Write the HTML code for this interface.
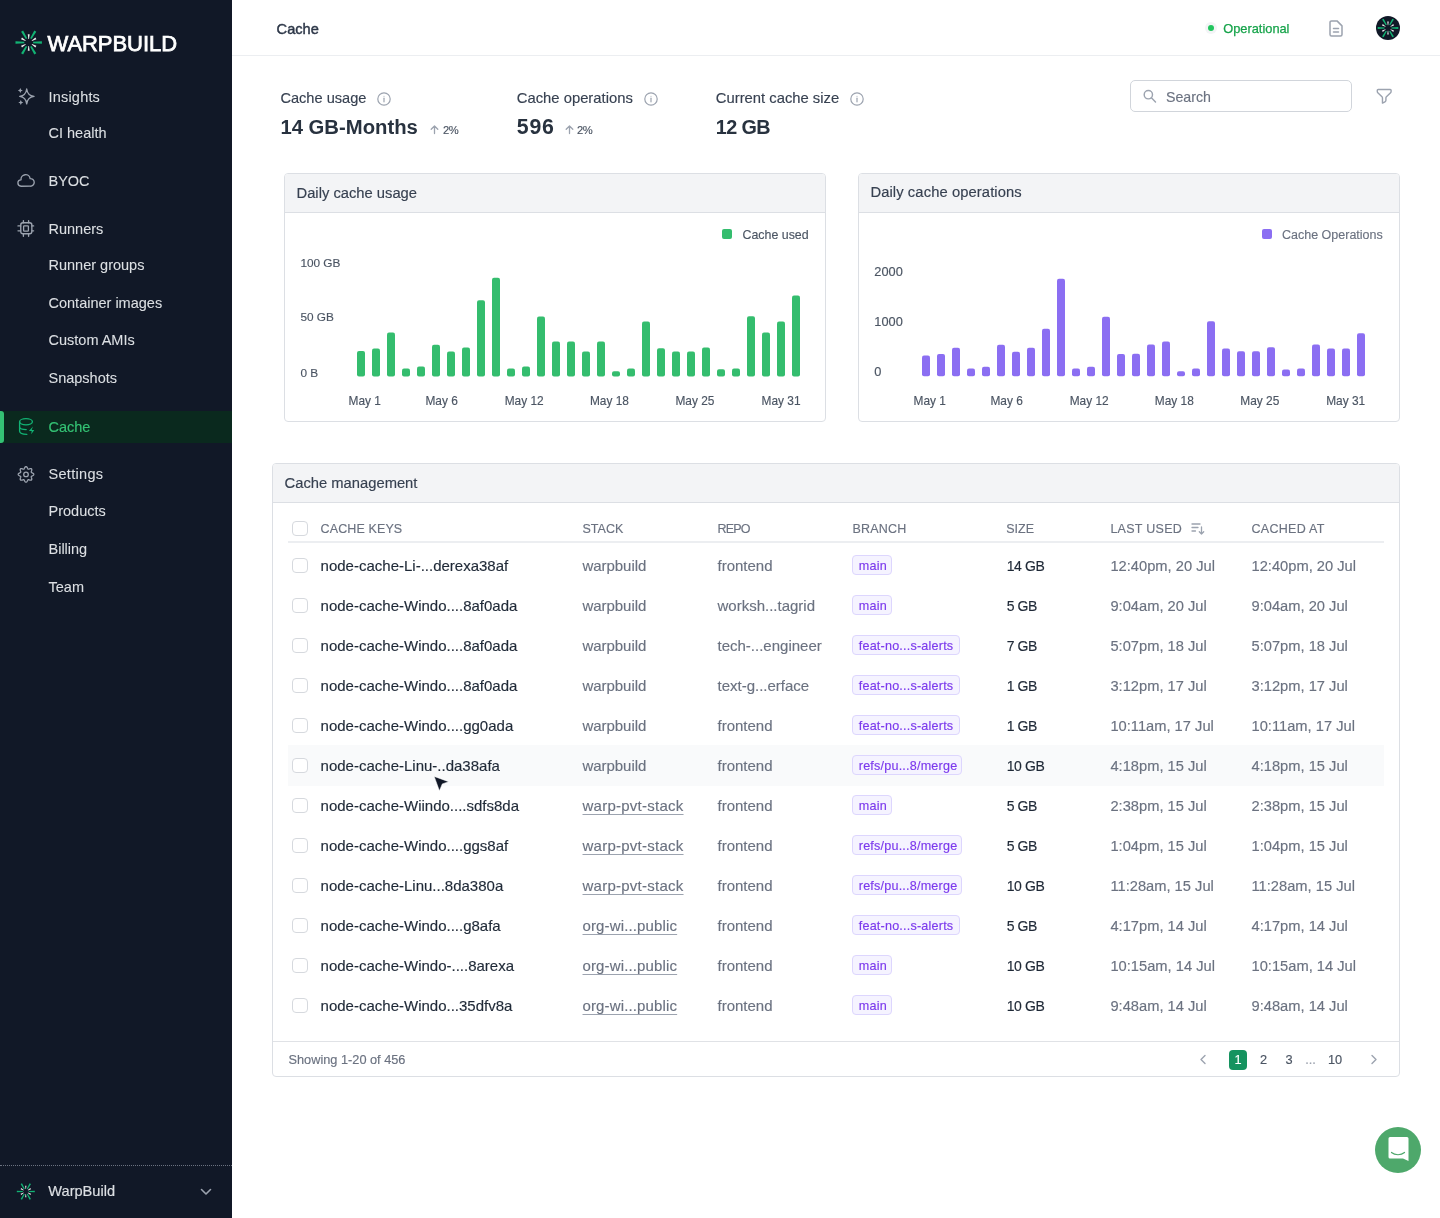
<!DOCTYPE html>
<html><head><meta charset="utf-8"><title>Cache - WarpBuild</title>
<style>
html,body{margin:0;padding:0;}
body{width:1440px;height:1218px;position:relative;overflow:hidden;background:#fff;font-family:"Liberation Sans",sans-serif;}
.t{position:absolute;white-space:nowrap;line-height:1;font-family:"Liberation Sans",sans-serif;-webkit-text-stroke-width:0.15px;}
#wrap{position:absolute;left:0;top:0;width:1440px;height:1218px;will-change:transform;}
svg{position:absolute;overflow:visible;}
</style></head><body><div id="wrap">

<div style="position:absolute;left:0px;top:0px;width:232px;height:1218px;background:#111827;"></div>
<svg style="left:0;top:0" width="232" height="1218"><path d="M33.10,43.30 L41.90,43.65 L41.90,41.35 L33.10,41.70Z" fill="#12b374"/><path d="M31.67,44.56 L35.41,47.47 L36.36,45.83 L31.97,44.04Z" fill="#eeeeee"/><path d="M30.21,46.71 L34.30,54.51 L36.30,53.36 L31.59,45.91Z" fill="#12b374"/><path d="M28.40,46.10 L27.75,50.80 L29.65,50.80 L29.00,46.10Z" fill="#eeeeee"/><path d="M25.81,45.91 L21.10,53.36 L23.10,54.51 L27.19,46.71Z" fill="#12b374"/><path d="M25.43,44.04 L21.04,45.83 L21.99,47.47 L25.73,44.56Z" fill="#eeeeee"/><path d="M24.30,41.70 L15.50,41.35 L15.50,43.65 L24.30,43.30Z" fill="#12b374"/><path d="M25.73,40.44 L21.99,37.53 L21.04,39.17 L25.43,40.96Z" fill="#eeeeee"/><path d="M27.19,38.29 L23.10,30.49 L21.10,31.64 L25.81,39.09Z" fill="#12b374"/><path d="M29.00,38.90 L29.65,34.20 L27.75,34.20 L28.40,38.90Z" fill="#eeeeee"/><path d="M31.59,39.09 L36.30,31.64 L34.30,30.49 L30.21,38.29Z" fill="#12b374"/><path d="M31.97,40.96 L36.36,39.17 L35.41,37.53 L31.67,40.44Z" fill="#eeeeee"/></svg>
<div class="t " style="left:47.50px;top:33.00px;font-size:22px;color:#ffffff;-webkit-text-stroke:0.62px #ffffff;letter-spacing:-0.05px;-webkit-text-stroke:0.75px #fff;">WARPBUILD</div>
<div class="t " style="left:48.50px;top:90.00px;font-size:14.5px;color:#dcdfe3;letter-spacing:0.2px;-webkit-text-stroke-width:0.1px;">Insights</div>
<div class="t " style="left:48.50px;top:126.00px;font-size:14.5px;color:#dcdfe3;letter-spacing:0px;-webkit-text-stroke-width:0.1px;">CI health</div>
<div class="t " style="left:48.50px;top:174.00px;font-size:14.5px;color:#dcdfe3;letter-spacing:0px;-webkit-text-stroke-width:0.1px;">BYOC</div>
<div class="t " style="left:48.50px;top:222.00px;font-size:14.5px;color:#dcdfe3;letter-spacing:0px;-webkit-text-stroke-width:0.1px;">Runners</div>
<div class="t " style="left:48.50px;top:258.00px;font-size:14.5px;color:#dcdfe3;letter-spacing:0px;-webkit-text-stroke-width:0.1px;">Runner groups</div>
<div class="t " style="left:48.50px;top:296.00px;font-size:14.5px;color:#dcdfe3;letter-spacing:0px;-webkit-text-stroke-width:0.1px;">Container images</div>
<div class="t " style="left:48.50px;top:333.00px;font-size:14.5px;color:#dcdfe3;letter-spacing:0px;-webkit-text-stroke-width:0.1px;">Custom AMIs</div>
<div class="t " style="left:48.50px;top:371.00px;font-size:14.5px;color:#dcdfe3;letter-spacing:0px;-webkit-text-stroke-width:0.1px;">Snapshots</div>
<div class="t " style="left:48.50px;top:467.00px;font-size:14.5px;color:#dcdfe3;letter-spacing:0.3px;-webkit-text-stroke-width:0.1px;">Settings</div>
<div class="t " style="left:48.50px;top:504.00px;font-size:14.5px;color:#dcdfe3;letter-spacing:0px;-webkit-text-stroke-width:0.1px;">Products</div>
<div class="t " style="left:48.50px;top:542.00px;font-size:14.5px;color:#dcdfe3;letter-spacing:0px;-webkit-text-stroke-width:0.1px;">Billing</div>
<div class="t " style="left:48.50px;top:580.00px;font-size:14.5px;color:#dcdfe3;letter-spacing:0px;-webkit-text-stroke-width:0.1px;">Team</div>
<div style="position:absolute;left:0px;top:410.5px;width:232px;height:32px;background:#0a291e;"></div>
<div style="position:absolute;left:0px;top:410.5px;width:4px;height:32px;background:#34c274;border-radius:0 3px 3px 0;"></div>
<div class="t " style="left:48.50px;top:420.00px;font-size:14.5px;color:#34c274;">Cache</div>
<svg style="left:0;top:0" width="232" height="600">
<g fill="none" stroke="#9ca3af" stroke-width="1.35" stroke-linecap="round" stroke-linejoin="round">
<path d="M26.7,89 Q27.5,95.6 34,96.4 Q27.5,97.2 26.7,103.9 Q25.9,97.2 19.7,96.4 Q25.9,95.6 26.7,89 Z"/>
<path d="M21.2,186.2 A3.2,3.2 0 0 1 21.03,179.80 A4.6,4.6 0 0 1 30.15,178.61 A3.8,3.8 0 1 1 30.4,186.2 Z"/>
<rect x="20.75" y="222.75" width="11.1" height="11" rx="2.2"/>
<path d="M23.4,220.6V222.7 M28.6,220.6V222.7 M23.4,233.8V236.2 M28.6,233.8V236.2 M18,225.9H20.7 M18,230.8H20.7 M31.9,225.9H33.6 M31.9,230.8H33.6"/>
<rect x="23.6" y="225.85" width="4.8" height="5.3" rx="0.6" stroke-width="1.3"/>
<path d="M33.80,474.40 L33.74,474.70 L33.58,475.00 L33.32,475.27 L32.99,475.51 L32.62,475.72 L32.25,475.90 L31.90,476.06 L31.61,476.22 L31.40,476.39 L31.27,476.58 L31.22,476.81 L31.26,477.08 L31.35,477.40 L31.48,477.76 L31.61,478.15 L31.72,478.56 L31.79,478.96 L31.78,479.34 L31.69,479.66 L31.52,479.92 L31.26,480.09 L30.94,480.18 L30.56,480.19 L30.16,480.12 L29.75,480.01 L29.36,479.88 L29.00,479.75 L28.68,479.66 L28.41,479.62 L28.18,479.67 L27.99,479.80 L27.82,480.01 L27.66,480.30 L27.50,480.65 L27.32,481.02 L27.11,481.39 L26.87,481.72 L26.60,481.98 L26.30,482.14 L26.00,482.20 L25.70,482.14 L25.40,481.98 L25.13,481.72 L24.89,481.39 L24.68,481.02 L24.50,480.65 L24.34,480.30 L24.18,480.01 L24.01,479.80 L23.82,479.67 L23.59,479.62 L23.32,479.66 L23.00,479.75 L22.64,479.88 L22.25,480.01 L21.84,480.12 L21.44,480.19 L21.06,480.18 L20.74,480.09 L20.48,479.92 L20.31,479.66 L20.22,479.34 L20.21,478.96 L20.28,478.56 L20.39,478.15 L20.52,477.76 L20.65,477.40 L20.74,477.08 L20.78,476.81 L20.73,476.58 L20.60,476.39 L20.39,476.22 L20.10,476.06 L19.75,475.90 L19.38,475.72 L19.01,475.51 L18.68,475.27 L18.42,475.00 L18.26,474.70 L18.20,474.40 L18.26,474.10 L18.42,473.80 L18.68,473.53 L19.01,473.29 L19.38,473.08 L19.75,472.90 L20.10,472.74 L20.39,472.58 L20.60,472.41 L20.73,472.22 L20.78,471.99 L20.74,471.72 L20.65,471.40 L20.52,471.04 L20.39,470.65 L20.28,470.24 L20.21,469.84 L20.22,469.46 L20.31,469.14 L20.48,468.88 L20.74,468.71 L21.06,468.62 L21.44,468.61 L21.84,468.68 L22.25,468.79 L22.64,468.92 L23.00,469.05 L23.32,469.14 L23.59,469.18 L23.82,469.13 L24.01,469.00 L24.18,468.79 L24.34,468.50 L24.50,468.15 L24.68,467.78 L24.89,467.41 L25.13,467.08 L25.40,466.82 L25.70,466.66 L26.00,466.60 L26.30,466.66 L26.60,466.82 L26.87,467.08 L27.11,467.41 L27.32,467.78 L27.50,468.15 L27.66,468.50 L27.82,468.79 L27.99,469.00 L28.18,469.13 L28.41,469.18 L28.68,469.14 L29.00,469.05 L29.36,468.92 L29.75,468.79 L30.16,468.68 L30.56,468.61 L30.94,468.62 L31.26,468.71 L31.52,468.88 L31.69,469.14 L31.78,469.46 L31.79,469.84 L31.72,470.24 L31.61,470.65 L31.48,471.04 L31.35,471.40 L31.26,471.72 L31.22,471.99 L31.27,472.22 L31.40,472.41 L31.61,472.58 L31.90,472.74 L32.25,472.90 L32.62,473.08 L32.99,473.29 L33.32,473.53 L33.58,473.80 L33.74,474.10 L33.80,474.40Z" stroke-width="1.3"/>
<circle cx="26" cy="474.4" r="2.3" stroke-width="1.3"/>
</g>
<g fill="#9ca3af">
<path d="M20.3,88 Q20.7,90.1 22.8,90.5 Q20.7,90.9 20.3,93 Q19.9,90.9 17.8,90.5 Q19.9,90.1 20.3,88 Z"/>
<path d="M20.8,99.9 Q21.2,102 23.3,102.4 Q21.2,102.8 20.8,104.9 Q20.4,102.8 18.3,102.4 Q20.4,102 20.8,99.9 Z"/>
</g>
<g fill="none" stroke="#12b374" stroke-width="1.35" stroke-linecap="round" stroke-linejoin="round">
<ellipse cx="26" cy="421.8" rx="6.4" ry="3.1"/>
<path d="M19.6,421.8 V431.3 Q19.8,434.3 26.8,434.4"/>
<path d="M19.6,427.4 Q20.2,429.6 26.2,429.6"/>
</g>
<path d="M32.9,426.6 L28.9,431 L31.7,431 L31.2,434.3 L34.3,429.9 L31.7,429.9 Z" fill="#12b374"/>
</svg>
<div style="position:absolute;left:0px;top:1165px;width:232px;height:0px;border-top:1px dotted #6b7280;"></div>
<svg style="left:0;top:0" width="232" height="1218"><path d="M28.79,1192.04 L34.78,1192.28 L34.78,1190.72 L28.79,1190.96Z" fill="#12b374"/><path d="M27.82,1192.90 L30.36,1194.88 L31.01,1193.76 L28.02,1192.55Z" fill="#eeeeee"/><path d="M26.82,1194.36 L29.61,1199.66 L30.97,1198.88 L27.77,1193.82Z" fill="#12b374"/><path d="M25.60,1193.95 L25.15,1197.14 L26.45,1197.14 L26.00,1193.95Z" fill="#eeeeee"/><path d="M23.83,1193.82 L20.63,1198.88 L21.99,1199.66 L24.78,1194.36Z" fill="#12b374"/><path d="M23.58,1192.55 L20.59,1193.76 L21.24,1194.88 L23.78,1192.90Z" fill="#eeeeee"/><path d="M22.81,1190.96 L16.82,1190.72 L16.82,1192.28 L22.81,1192.04Z" fill="#12b374"/><path d="M23.78,1190.10 L21.24,1188.12 L20.59,1189.24 L23.58,1190.45Z" fill="#eeeeee"/><path d="M24.78,1188.64 L21.99,1183.34 L20.63,1184.12 L23.83,1189.18Z" fill="#12b374"/><path d="M26.00,1189.05 L26.45,1185.86 L25.15,1185.86 L25.60,1189.05Z" fill="#eeeeee"/><path d="M27.77,1189.18 L30.97,1184.12 L29.61,1183.34 L26.82,1188.64Z" fill="#12b374"/><path d="M28.02,1190.45 L31.01,1189.24 L30.36,1188.12 L27.82,1190.10Z" fill="#eeeeee"/></svg>
<div class="t " style="left:48.30px;top:1184.00px;font-size:14.6px;color:#dcdfe3;-webkit-text-stroke-width:0.2px;">WarpBuild</div>
<svg style="left:200px;top:1186px" width="12" height="12" viewBox="0 0 12 12" fill="none" stroke="#9ca3af" stroke-width="1.6" stroke-linecap="round" stroke-linejoin="round"><path d="M1.5 3.5 6 8l4.5-4.5"/></svg>
<div style="position:absolute;left:232px;top:55px;width:1208px;height:1px;background:#eceef1;"></div>
<div class="t " style="left:276.60px;top:22.00px;font-size:14.6px;color:#2d3748;-webkit-text-stroke:0.41px #2d3748;-webkit-text-stroke-width:0.45px;">Cache</div>
<div style="position:absolute;left:1205px;top:22.3px;width:12px;height:12px;background:#f3f4f6;border-radius:50%;"></div>
<div style="position:absolute;left:1208px;top:25.3px;width:6px;height:6px;background:#22c55e;border-radius:50%;"></div>
<div class="t " style="left:1223.30px;top:23.00px;font-size:12.8px;color:#16a34a;font-weight:400;-webkit-text-stroke:0.25px #16a34a;">Operational</div>
<svg style="left:1326px;top:18px" width="20" height="20" viewBox="0 0 20 20" fill="none" stroke="#9ca3af" stroke-width="1.5" stroke-linecap="round" stroke-linejoin="round">
<path d="M4 4.4a1.5 1.5 0 0 1 1.5-1.5H11l5 5v8.6a1.5 1.5 0 0 1-1.5 1.5h-9A1.5 1.5 0 0 1 4 16.5Z"/><path d="M7.5 10.4h5M7.5 13.9h5"/></svg>
<div style="position:absolute;left:1376px;top:16px;width:24px;height:24px;background:#111827;border-radius:50%;"></div>
<svg style="left:0;top:0" width="1440" height="60"><path d="M1391.43,28.62 L1398.30,28.90 L1398.30,27.10 L1391.43,27.38Z" fill="#12b374"/><path d="M1390.31,29.61 L1393.24,31.88 L1393.98,30.60 L1390.55,29.20Z" fill="#eeeeee"/><path d="M1389.18,31.28 L1392.37,37.37 L1393.92,36.47 L1390.26,30.66Z" fill="#12b374"/><path d="M1387.77,30.81 L1387.26,34.47 L1388.74,34.47 L1388.23,30.81Z" fill="#eeeeee"/><path d="M1385.74,30.66 L1382.08,36.47 L1383.63,37.37 L1386.82,31.28Z" fill="#12b374"/><path d="M1385.45,29.20 L1382.02,30.60 L1382.76,31.88 L1385.69,29.61Z" fill="#eeeeee"/><path d="M1384.57,27.38 L1377.70,27.10 L1377.70,28.90 L1384.57,28.62Z" fill="#12b374"/><path d="M1385.69,26.39 L1382.76,24.12 L1382.02,25.40 L1385.45,26.80Z" fill="#eeeeee"/><path d="M1386.82,24.72 L1383.63,18.63 L1382.08,19.53 L1385.74,25.34Z" fill="#12b374"/><path d="M1388.23,25.19 L1388.74,21.53 L1387.26,21.53 L1387.77,25.19Z" fill="#eeeeee"/><path d="M1390.26,25.34 L1393.92,19.53 L1392.37,18.63 L1389.18,24.72Z" fill="#12b374"/><path d="M1390.55,26.80 L1393.98,25.40 L1393.24,24.12 L1390.31,26.39Z" fill="#eeeeee"/></svg>
<div class="t " style="left:280.40px;top:91.00px;font-size:14.6px;color:#374151;">Cache usage</div>
<svg style="left:377px;top:91.8px" width="14" height="14" viewBox="0 0 14 14" fill="none" stroke="#9ca3af" stroke-width="1.2"><circle cx="7" cy="7" r="6.2"/><path d="M7 6.2v3.6" stroke-linecap="round"/><circle cx="7" cy="4.2" r="0.5" fill="#9ca3af" stroke="none"/></svg>
<div class="t " style="left:280.40px;top:117.00px;font-size:20.3px;color:#28323f;font-weight:700;-webkit-text-stroke-width:0;">14 GB-Months</div>
<svg style="left:429.7px;top:125px" width="9" height="9" viewBox="0 0 9 9" fill="none" stroke="#9ca3af" stroke-width="1.3" stroke-linecap="round" stroke-linejoin="round"><path d="M4.5 8.5V1M1.2 4.3 4.5 1l3.3 3.3"/></svg>
<div class="t " style="left:443.00px;top:125.00px;font-size:11.2px;color:#4b5563;letter-spacing:-0.4px;">2%</div>
<div class="t " style="left:516.80px;top:91.00px;font-size:14.8px;color:#374151;">Cache operations</div>
<svg style="left:644px;top:91.8px" width="14" height="14" viewBox="0 0 14 14" fill="none" stroke="#9ca3af" stroke-width="1.2"><circle cx="7" cy="7" r="6.2"/><path d="M7 6.2v3.6" stroke-linecap="round"/><circle cx="7" cy="4.2" r="0.5" fill="#9ca3af" stroke="none"/></svg>
<div class="t " style="left:516.80px;top:117.00px;font-size:21.3px;color:#28323f;font-weight:700;-webkit-text-stroke-width:0;letter-spacing:0.8px;">596</div>
<svg style="left:564.7px;top:125px" width="9" height="9" viewBox="0 0 9 9" fill="none" stroke="#9ca3af" stroke-width="1.3" stroke-linecap="round" stroke-linejoin="round"><path d="M4.5 8.5V1M1.2 4.3 4.5 1l3.3 3.3"/></svg>
<div class="t " style="left:577.00px;top:125.00px;font-size:11.2px;color:#4b5563;letter-spacing:-0.4px;">2%</div>
<div class="t " style="left:715.80px;top:91.00px;font-size:14.8px;color:#374151;">Current cache size</div>
<svg style="left:850px;top:91.8px" width="14" height="14" viewBox="0 0 14 14" fill="none" stroke="#9ca3af" stroke-width="1.2"><circle cx="7" cy="7" r="6.2"/><path d="M7 6.2v3.6" stroke-linecap="round"/><circle cx="7" cy="4.2" r="0.5" fill="#9ca3af" stroke="none"/></svg>
<div class="t " style="left:715.80px;top:118.00px;font-size:19.8px;color:#28323f;font-weight:700;-webkit-text-stroke-width:0;letter-spacing:-0.6px;">12 GB</div>
<div style="position:absolute;left:1130px;top:80.4px;width:220px;height:30px;border:1px solid #d1d5db;border-radius:5px;background:#fff;"></div>
<svg style="left:1142px;top:89px" width="16" height="16" viewBox="0 0 16 16" fill="none" stroke="#9ca3af" stroke-width="1.45" stroke-linecap="round"><circle cx="6.35" cy="5.7" r="4.15"/><path d="M9.4 8.8l4.1 4.1"/></svg>
<div class="t " style="left:1166.00px;top:90.00px;font-size:14.2px;color:#6b7280;">Search</div>
<svg style="left:1375px;top:87px" width="18.4" height="18.4" viewBox="0 0 24 24" fill="none" stroke="#9ca3af" stroke-width="1.85" stroke-linecap="round" stroke-linejoin="round"><path d="M4.1 3.2H19.9a1.1 1.1 0 0 1 1.1 1.1v1.5a2.25 2.25 0 0 1-.659 1.591l-5.432 5.432a2.25 2.25 0 0 0-.659 1.591v2.927a2.25 2.25 0 0 1-1.244 2.013L9.75 21v-6.568a2.25 2.25 0 0 0-.659-1.591L3.659 7.409A2.25 2.25 0 0 1 3 5.818V4.3a1.1 1.1 0 0 1 1.1-1.1Z"/></svg>
<div style="position:absolute;left:284px;top:173px;width:540px;height:247px;border:1px solid #dcdfe4;border-radius:4px;background:#fff;"></div>
<div style="position:absolute;left:285px;top:174px;width:540px;height:38px;background:#f3f4f6;border-bottom:1px solid #dcdfe4;border-radius:3px 3px 0 0;"></div>
<div class="t " style="left:296.50px;top:186.00px;font-size:14.75px;color:#374151;">Daily cache usage</div>
<div style="position:absolute;left:858px;top:173px;width:540px;height:247px;border:1px solid #dcdfe4;border-radius:4px;background:#fff;"></div>
<div style="position:absolute;left:859px;top:174px;width:540px;height:38px;background:#f3f4f6;border-bottom:1px solid #dcdfe4;border-radius:3px 3px 0 0;"></div>
<div class="t " style="left:870.40px;top:185.00px;font-size:14.75px;color:#374151;letter-spacing:0.1px;">Daily cache operations</div>
<svg style="left:0;top:0" width="1440" height="450"><rect x="357.0" y="350.9" width="8" height="25.6" rx="2" fill="#34bd6e"/><rect x="372.0" y="348.4" width="8" height="28.1" rx="2" fill="#34bd6e"/><rect x="387.0" y="332.5" width="8" height="44.0" rx="2" fill="#34bd6e"/><rect x="402.0" y="368.5" width="8" height="8.0" rx="2" fill="#34bd6e"/><rect x="417.0" y="366.6" width="8" height="9.9" rx="2" fill="#34bd6e"/><rect x="432.0" y="344.7" width="8" height="31.8" rx="2" fill="#34bd6e"/><rect x="447.0" y="351.6" width="8" height="24.9" rx="2" fill="#34bd6e"/><rect x="462.0" y="347.5" width="8" height="29.0" rx="2" fill="#34bd6e"/><rect x="477.0" y="300.3" width="8" height="76.2" rx="2" fill="#34bd6e"/><rect x="492.0" y="277.8" width="8" height="98.8" rx="2" fill="#34bd6e"/><rect x="507.0" y="368.5" width="8" height="8.0" rx="2" fill="#34bd6e"/><rect x="522.0" y="366.6" width="8" height="9.9" rx="2" fill="#34bd6e"/><rect x="537.0" y="316.6" width="8" height="59.9" rx="2" fill="#34bd6e"/><rect x="552.0" y="341.5" width="8" height="35.0" rx="2" fill="#34bd6e"/><rect x="567.0" y="341.5" width="8" height="35.0" rx="2" fill="#34bd6e"/><rect x="582.0" y="351.6" width="8" height="24.9" rx="2" fill="#34bd6e"/><rect x="597.0" y="341.5" width="8" height="35.0" rx="2" fill="#34bd6e"/><rect x="612.0" y="371.3" width="8" height="5.2" rx="2" fill="#34bd6e"/><rect x="627.0" y="368.4" width="8" height="8.1" rx="2" fill="#34bd6e"/><rect x="642.0" y="321.5" width="8" height="55.0" rx="2" fill="#34bd6e"/><rect x="657.0" y="348.3" width="8" height="28.2" rx="2" fill="#34bd6e"/><rect x="672.0" y="351.6" width="8" height="24.9" rx="2" fill="#34bd6e"/><rect x="687.0" y="351.6" width="8" height="24.9" rx="2" fill="#34bd6e"/><rect x="702.0" y="347.4" width="8" height="29.1" rx="2" fill="#34bd6e"/><rect x="717.0" y="369.3" width="8" height="7.2" rx="2" fill="#34bd6e"/><rect x="732.0" y="368.4" width="8" height="8.1" rx="2" fill="#34bd6e"/><rect x="747.0" y="316.2" width="8" height="60.3" rx="2" fill="#34bd6e"/><rect x="762.0" y="332.4" width="8" height="44.1" rx="2" fill="#34bd6e"/><rect x="777.0" y="321.5" width="8" height="55.0" rx="2" fill="#34bd6e"/><rect x="792.0" y="295.4" width="8" height="81.1" rx="2" fill="#34bd6e"/><rect x="922.0" y="355.6" width="8" height="20.6" rx="2" fill="#8b6ef2"/><rect x="937.0" y="354.0" width="8" height="22.2" rx="2" fill="#8b6ef2"/><rect x="952.0" y="347.8" width="8" height="28.4" rx="2" fill="#8b6ef2"/><rect x="967.0" y="368.6" width="8" height="7.6" rx="2" fill="#8b6ef2"/><rect x="982.0" y="366.7" width="8" height="9.5" rx="2" fill="#8b6ef2"/><rect x="997.0" y="344.7" width="8" height="31.5" rx="2" fill="#8b6ef2"/><rect x="1012.0" y="351.7" width="8" height="24.5" rx="2" fill="#8b6ef2"/><rect x="1027.0" y="347.8" width="8" height="28.4" rx="2" fill="#8b6ef2"/><rect x="1042.0" y="328.7" width="8" height="47.5" rx="2" fill="#8b6ef2"/><rect x="1057.0" y="278.8" width="8" height="97.4" rx="2" fill="#8b6ef2"/><rect x="1072.0" y="368.6" width="8" height="7.6" rx="2" fill="#8b6ef2"/><rect x="1087.0" y="366.7" width="8" height="9.5" rx="2" fill="#8b6ef2"/><rect x="1102.0" y="316.7" width="8" height="59.5" rx="2" fill="#8b6ef2"/><rect x="1117.0" y="354.0" width="8" height="22.2" rx="2" fill="#8b6ef2"/><rect x="1132.0" y="353.8" width="8" height="22.4" rx="2" fill="#8b6ef2"/><rect x="1147.0" y="344.5" width="8" height="31.7" rx="2" fill="#8b6ef2"/><rect x="1162.0" y="341.6" width="8" height="34.6" rx="2" fill="#8b6ef2"/><rect x="1177.0" y="371.2" width="8" height="5.0" rx="2" fill="#8b6ef2"/><rect x="1192.0" y="368.4" width="8" height="7.8" rx="2" fill="#8b6ef2"/><rect x="1207.0" y="321.2" width="8" height="55.0" rx="2" fill="#8b6ef2"/><rect x="1222.0" y="348.4" width="8" height="27.8" rx="2" fill="#8b6ef2"/><rect x="1237.0" y="351.2" width="8" height="25.0" rx="2" fill="#8b6ef2"/><rect x="1252.0" y="351.2" width="8" height="25.0" rx="2" fill="#8b6ef2"/><rect x="1267.0" y="347.3" width="8" height="28.9" rx="2" fill="#8b6ef2"/><rect x="1282.0" y="369.5" width="8" height="6.7" rx="2" fill="#8b6ef2"/><rect x="1297.0" y="368.4" width="8" height="7.8" rx="2" fill="#8b6ef2"/><rect x="1312.0" y="344.5" width="8" height="31.7" rx="2" fill="#8b6ef2"/><rect x="1327.0" y="348.4" width="8" height="27.8" rx="2" fill="#8b6ef2"/><rect x="1342.0" y="348.4" width="8" height="27.8" rx="2" fill="#8b6ef2"/><rect x="1357.0" y="333.2" width="8" height="43.0" rx="2" fill="#8b6ef2"/></svg>
<div class="t " style="left:300.40px;top:258.00px;font-size:11.8px;color:#4b5563;">100 GB</div>
<div class="t " style="left:300.40px;top:312.00px;font-size:11.8px;color:#4b5563;">50 GB</div>
<div class="t " style="left:300.40px;top:368.00px;font-size:11.8px;color:#4b5563;">0 B</div>
<div class="t " style="left:348.50px;top:396.00px;font-size:11.9px;color:#4b5563;">May 1</div>
<div class="t " style="left:425.40px;top:396.00px;font-size:11.9px;color:#4b5563;">May 6</div>
<div class="t " style="left:504.70px;top:396.00px;font-size:11.9px;color:#4b5563;">May 12</div>
<div class="t " style="left:589.90px;top:396.00px;font-size:11.9px;color:#4b5563;">May 18</div>
<div class="t " style="left:675.40px;top:396.00px;font-size:11.9px;color:#4b5563;">May 25</div>
<div class="t " style="left:761.50px;top:396.00px;font-size:11.9px;color:#4b5563;">May 31</div>
<div style="position:absolute;left:722px;top:229.3px;width:10px;height:10px;background:#34bd6e;border-radius:2px;"></div>
<div class="t " style="left:742.50px;top:229.00px;font-size:12.4px;color:#4b5563;">Cache used</div>
<div class="t " style="left:874.30px;top:266.00px;font-size:12.8px;color:#4b5563;">2000</div>
<div class="t " style="left:874.30px;top:316.00px;font-size:12.8px;color:#4b5563;">1000</div>
<div class="t " style="left:874.30px;top:366.00px;font-size:12.8px;color:#4b5563;">0</div>
<div class="t " style="left:913.60px;top:396.00px;font-size:11.9px;color:#4b5563;">May 1</div>
<div class="t " style="left:990.40px;top:396.00px;font-size:11.9px;color:#4b5563;">May 6</div>
<div class="t " style="left:1069.70px;top:396.00px;font-size:11.9px;color:#4b5563;">May 12</div>
<div class="t " style="left:1154.80px;top:396.00px;font-size:11.9px;color:#4b5563;">May 18</div>
<div class="t " style="left:1240.30px;top:396.00px;font-size:11.9px;color:#4b5563;">May 25</div>
<div class="t " style="left:1326.20px;top:396.00px;font-size:11.9px;color:#4b5563;">May 31</div>
<div style="position:absolute;left:1261.8px;top:229.3px;width:10px;height:10px;background:#8b6ef2;border-radius:2px;"></div>
<div class="t " style="left:1282.00px;top:229.00px;font-size:12.5px;color:#6b7280;">Cache Operations</div>
<div style="position:absolute;left:272px;top:463px;width:1126px;height:612px;border:1px solid #dcdfe4;border-radius:4px;background:#fff;"></div>
<div style="position:absolute;left:273px;top:464px;width:1126px;height:38px;background:#f3f4f6;border-bottom:1px solid #dcdfe4;border-radius:3px 3px 0 0;"></div>
<div class="t " style="left:284.60px;top:476.00px;font-size:14.75px;color:#374151;">Cache management</div>
<div style="position:absolute;left:292.25px;top:520.6px;width:13.5px;height:13.5px;border:1.25px solid #d6d9de;border-radius:4px;background:#fff;"></div>
<div class="t " style="left:320.60px;top:523.00px;font-size:12.5px;color:#6b7280;letter-spacing:0.11px;">CACHE KEYS</div>
<div class="t " style="left:582.50px;top:523.00px;font-size:12.5px;color:#6b7280;letter-spacing:0px;">STACK</div>
<div class="t " style="left:717.50px;top:523.00px;font-size:12.5px;color:#6b7280;letter-spacing:-0.8px;">REPO</div>
<div class="t " style="left:852.50px;top:523.00px;font-size:12.5px;color:#6b7280;letter-spacing:0.22px;">BRANCH</div>
<div class="t " style="left:1006.25px;top:523.00px;font-size:12.5px;color:#6b7280;letter-spacing:0px;">SIZE</div>
<div class="t " style="left:1110.40px;top:523.00px;font-size:12.5px;color:#6b7280;letter-spacing:0.27px;">LAST USED</div>
<div class="t " style="left:1251.50px;top:523.00px;font-size:12.5px;color:#6b7280;letter-spacing:0.29px;">CACHED AT</div>
<svg style="left:1191px;top:522px" width="14" height="13" viewBox="0 0 14 13" fill="none" stroke="#9ca3af" stroke-width="1.3" stroke-linecap="round" stroke-linejoin="round"><path d="M1 2h8M1 5.5h6M1 9h3.5M10.5 5v7M8.3 9.8l2.2 2.2 2.2-2.2"/></svg>
<div style="position:absolute;left:288px;top:541px;width:1096px;height:2px;background:#eceef1;"></div>
<div style="position:absolute;left:292.25px;top:557.75px;width:13.5px;height:13.5px;border:1.25px solid #d6d9de;border-radius:4px;background:#fff;"></div>
<div class="t " style="left:320.60px;top:558.00px;font-size:15.0px;color:#1f2937;">node-cache-Li-...derexa38af</div>
<div class="t " style="left:582.50px;top:558.00px;font-size:15px;color:#6b7280;letter-spacing:-0.05px;">warpbuild</div>
<div class="t " style="left:717.50px;top:558.00px;font-size:15.0px;color:#6b7280;">frontend</div>
<div style="position:absolute;left:852px;top:555px;width:38px;height:18px;border:1px solid #ddd6fe;background:#f5f3ff;border-radius:4px;"></div>
<div class="t " style="left:858.75px;top:560.00px;font-size:12.6px;color:#7c3aed;letter-spacing:0.2px;">main</div>
<div class="t " style="left:1006.70px;top:559.00px;font-size:14px;color:#1f2937;letter-spacing:-0.4px;">14 GB</div>
<div class="t " style="left:1110.40px;top:559.00px;font-size:14.7px;color:#6b7280;">12:40pm, 20 Jul</div>
<div class="t " style="left:1251.50px;top:559.00px;font-size:14.7px;color:#6b7280;">12:40pm, 20 Jul</div>
<div style="position:absolute;left:292.25px;top:597.75px;width:13.5px;height:13.5px;border:1.25px solid #d6d9de;border-radius:4px;background:#fff;"></div>
<div class="t " style="left:320.60px;top:598.00px;font-size:15.0px;color:#1f2937;">node-cache-Windo....8af0ada</div>
<div class="t " style="left:582.50px;top:598.00px;font-size:15px;color:#6b7280;letter-spacing:-0.05px;">warpbuild</div>
<div class="t " style="left:717.50px;top:598.00px;font-size:15.0px;color:#6b7280;">worksh...tagrid</div>
<div style="position:absolute;left:852px;top:595px;width:38px;height:18px;border:1px solid #ddd6fe;background:#f5f3ff;border-radius:4px;"></div>
<div class="t " style="left:858.75px;top:600.00px;font-size:12.6px;color:#7c3aed;letter-spacing:0.2px;">main</div>
<div class="t " style="left:1006.70px;top:599.00px;font-size:14px;color:#1f2937;letter-spacing:-0.4px;">5 GB</div>
<div class="t " style="left:1110.40px;top:599.00px;font-size:14.7px;color:#6b7280;">9:04am, 20 Jul</div>
<div class="t " style="left:1251.50px;top:599.00px;font-size:14.7px;color:#6b7280;">9:04am, 20 Jul</div>
<div style="position:absolute;left:292.25px;top:637.75px;width:13.5px;height:13.5px;border:1.25px solid #d6d9de;border-radius:4px;background:#fff;"></div>
<div class="t " style="left:320.60px;top:638.00px;font-size:15.0px;color:#1f2937;">node-cache-Windo....8af0ada</div>
<div class="t " style="left:582.50px;top:638.00px;font-size:15px;color:#6b7280;letter-spacing:-0.05px;">warpbuild</div>
<div class="t " style="left:717.50px;top:638.00px;font-size:15.0px;color:#6b7280;">tech-...engineer</div>
<div style="position:absolute;left:852px;top:635px;width:106px;height:18px;border:1px solid #ddd6fe;background:#f5f3ff;border-radius:4px;"></div>
<div class="t " style="left:858.75px;top:640.00px;font-size:12.6px;color:#7c3aed;letter-spacing:0.2px;">feat-no...s-alerts</div>
<div class="t " style="left:1006.70px;top:639.00px;font-size:14px;color:#1f2937;letter-spacing:-0.4px;">7 GB</div>
<div class="t " style="left:1110.40px;top:639.00px;font-size:14.7px;color:#6b7280;">5:07pm, 18 Jul</div>
<div class="t " style="left:1251.50px;top:639.00px;font-size:14.7px;color:#6b7280;">5:07pm, 18 Jul</div>
<div style="position:absolute;left:292.25px;top:677.75px;width:13.5px;height:13.5px;border:1.25px solid #d6d9de;border-radius:4px;background:#fff;"></div>
<div class="t " style="left:320.60px;top:678.00px;font-size:15.0px;color:#1f2937;">node-cache-Windo....8af0ada</div>
<div class="t " style="left:582.50px;top:678.00px;font-size:15px;color:#6b7280;letter-spacing:-0.05px;">warpbuild</div>
<div class="t " style="left:717.50px;top:678.00px;font-size:15.0px;color:#6b7280;">text-g...erface</div>
<div style="position:absolute;left:852px;top:675px;width:106px;height:18px;border:1px solid #ddd6fe;background:#f5f3ff;border-radius:4px;"></div>
<div class="t " style="left:858.75px;top:680.00px;font-size:12.6px;color:#7c3aed;letter-spacing:0.2px;">feat-no...s-alerts</div>
<div class="t " style="left:1006.70px;top:679.00px;font-size:14px;color:#1f2937;letter-spacing:-0.4px;">1 GB</div>
<div class="t " style="left:1110.40px;top:679.00px;font-size:14.7px;color:#6b7280;">3:12pm, 17 Jul</div>
<div class="t " style="left:1251.50px;top:679.00px;font-size:14.7px;color:#6b7280;">3:12pm, 17 Jul</div>
<div style="position:absolute;left:292.25px;top:717.75px;width:13.5px;height:13.5px;border:1.25px solid #d6d9de;border-radius:4px;background:#fff;"></div>
<div class="t " style="left:320.60px;top:718.00px;font-size:15.0px;color:#1f2937;">node-cache-Windo....gg0ada</div>
<div class="t " style="left:582.50px;top:718.00px;font-size:15px;color:#6b7280;letter-spacing:-0.05px;">warpbuild</div>
<div class="t " style="left:717.50px;top:718.00px;font-size:15.0px;color:#6b7280;">frontend</div>
<div style="position:absolute;left:852px;top:715px;width:106px;height:18px;border:1px solid #ddd6fe;background:#f5f3ff;border-radius:4px;"></div>
<div class="t " style="left:858.75px;top:720.00px;font-size:12.6px;color:#7c3aed;letter-spacing:0.2px;">feat-no...s-alerts</div>
<div class="t " style="left:1006.70px;top:719.00px;font-size:14px;color:#1f2937;letter-spacing:-0.4px;">1 GB</div>
<div class="t " style="left:1110.40px;top:719.00px;font-size:14.7px;color:#6b7280;">10:11am, 17 Jul</div>
<div class="t " style="left:1251.50px;top:719.00px;font-size:14.7px;color:#6b7280;">10:11am, 17 Jul</div>
<div style="position:absolute;left:288px;top:745px;width:1096px;height:41px;background:#f9fafb;"></div>
<div style="position:absolute;left:292.25px;top:757.75px;width:13.5px;height:13.5px;border:1.25px solid #d6d9de;border-radius:4px;background:#fff;"></div>
<div class="t " style="left:320.60px;top:758.00px;font-size:15.0px;color:#1f2937;">node-cache-Linu-..da38afa</div>
<div class="t " style="left:582.50px;top:758.00px;font-size:15px;color:#6b7280;letter-spacing:-0.05px;">warpbuild</div>
<div class="t " style="left:717.50px;top:758.00px;font-size:15.0px;color:#6b7280;">frontend</div>
<div style="position:absolute;left:852px;top:755px;width:108px;height:18px;border:1px solid #ddd6fe;background:#f5f3ff;border-radius:4px;"></div>
<div class="t " style="left:858.75px;top:760.00px;font-size:12.6px;color:#7c3aed;letter-spacing:0.2px;">refs/pu...8/merge</div>
<div class="t " style="left:1006.70px;top:759.00px;font-size:14px;color:#1f2937;letter-spacing:-0.4px;">10 GB</div>
<div class="t " style="left:1110.40px;top:759.00px;font-size:14.7px;color:#6b7280;">4:18pm, 15 Jul</div>
<div class="t " style="left:1251.50px;top:759.00px;font-size:14.7px;color:#6b7280;">4:18pm, 15 Jul</div>
<div style="position:absolute;left:292.25px;top:797.75px;width:13.5px;height:13.5px;border:1.25px solid #d6d9de;border-radius:4px;background:#fff;"></div>
<div class="t " style="left:320.60px;top:798.00px;font-size:15.0px;color:#1f2937;">node-cache-Wiindo....sdfs8da</div>
<div class="t " style="left:582.50px;top:798.00px;font-size:15px;color:#6b7280;letter-spacing:0.25px;text-decoration:underline;text-underline-offset:2.5px;text-decoration-skip-ink:none;text-decoration-color:#9ca3af;">warp-pvt-stack</div>
<div class="t " style="left:717.50px;top:798.00px;font-size:15.0px;color:#6b7280;">frontend</div>
<div style="position:absolute;left:852px;top:795px;width:38px;height:18px;border:1px solid #ddd6fe;background:#f5f3ff;border-radius:4px;"></div>
<div class="t " style="left:858.75px;top:800.00px;font-size:12.6px;color:#7c3aed;letter-spacing:0.2px;">main</div>
<div class="t " style="left:1006.70px;top:799.00px;font-size:14px;color:#1f2937;letter-spacing:-0.4px;">5 GB</div>
<div class="t " style="left:1110.40px;top:799.00px;font-size:14.7px;color:#6b7280;">2:38pm, 15 Jul</div>
<div class="t " style="left:1251.50px;top:799.00px;font-size:14.7px;color:#6b7280;">2:38pm, 15 Jul</div>
<div style="position:absolute;left:292.25px;top:837.75px;width:13.5px;height:13.5px;border:1.25px solid #d6d9de;border-radius:4px;background:#fff;"></div>
<div class="t " style="left:320.60px;top:838.00px;font-size:15.0px;color:#1f2937;">node-cache-Windo....ggs8af</div>
<div class="t " style="left:582.50px;top:838.00px;font-size:15px;color:#6b7280;letter-spacing:0.25px;text-decoration:underline;text-underline-offset:2.5px;text-decoration-skip-ink:none;text-decoration-color:#9ca3af;">warp-pvt-stack</div>
<div class="t " style="left:717.50px;top:838.00px;font-size:15.0px;color:#6b7280;">frontend</div>
<div style="position:absolute;left:852px;top:835px;width:108px;height:18px;border:1px solid #ddd6fe;background:#f5f3ff;border-radius:4px;"></div>
<div class="t " style="left:858.75px;top:840.00px;font-size:12.6px;color:#7c3aed;letter-spacing:0.2px;">refs/pu...8/merge</div>
<div class="t " style="left:1006.70px;top:839.00px;font-size:14px;color:#1f2937;letter-spacing:-0.4px;">5 GB</div>
<div class="t " style="left:1110.40px;top:839.00px;font-size:14.7px;color:#6b7280;">1:04pm, 15 Jul</div>
<div class="t " style="left:1251.50px;top:839.00px;font-size:14.7px;color:#6b7280;">1:04pm, 15 Jul</div>
<div style="position:absolute;left:292.25px;top:877.75px;width:13.5px;height:13.5px;border:1.25px solid #d6d9de;border-radius:4px;background:#fff;"></div>
<div class="t " style="left:320.60px;top:878.00px;font-size:15.0px;color:#1f2937;">node-cache-Linu...8da380a</div>
<div class="t " style="left:582.50px;top:878.00px;font-size:15px;color:#6b7280;letter-spacing:0.25px;text-decoration:underline;text-underline-offset:2.5px;text-decoration-skip-ink:none;text-decoration-color:#9ca3af;">warp-pvt-stack</div>
<div class="t " style="left:717.50px;top:878.00px;font-size:15.0px;color:#6b7280;">frontend</div>
<div style="position:absolute;left:852px;top:875px;width:108px;height:18px;border:1px solid #ddd6fe;background:#f5f3ff;border-radius:4px;"></div>
<div class="t " style="left:858.75px;top:880.00px;font-size:12.6px;color:#7c3aed;letter-spacing:0.2px;">refs/pu...8/merge</div>
<div class="t " style="left:1006.70px;top:879.00px;font-size:14px;color:#1f2937;letter-spacing:-0.4px;">10 GB</div>
<div class="t " style="left:1110.40px;top:879.00px;font-size:14.7px;color:#6b7280;">11:28am, 15 Jul</div>
<div class="t " style="left:1251.50px;top:879.00px;font-size:14.7px;color:#6b7280;">11:28am, 15 Jul</div>
<div style="position:absolute;left:292.25px;top:917.75px;width:13.5px;height:13.5px;border:1.25px solid #d6d9de;border-radius:4px;background:#fff;"></div>
<div class="t " style="left:320.60px;top:918.00px;font-size:15.0px;color:#1f2937;">node-cache-Windo....g8afa</div>
<div class="t " style="left:582.50px;top:918.00px;font-size:15px;color:#6b7280;letter-spacing:0.14px;text-decoration:underline;text-underline-offset:2.5px;text-decoration-skip-ink:none;text-decoration-color:#9ca3af;">org-wi...public</div>
<div class="t " style="left:717.50px;top:918.00px;font-size:15.0px;color:#6b7280;">frontend</div>
<div style="position:absolute;left:852px;top:915px;width:106px;height:18px;border:1px solid #ddd6fe;background:#f5f3ff;border-radius:4px;"></div>
<div class="t " style="left:858.75px;top:920.00px;font-size:12.6px;color:#7c3aed;letter-spacing:0.2px;">feat-no...s-alerts</div>
<div class="t " style="left:1006.70px;top:919.00px;font-size:14px;color:#1f2937;letter-spacing:-0.4px;">5 GB</div>
<div class="t " style="left:1110.40px;top:919.00px;font-size:14.7px;color:#6b7280;">4:17pm, 14 Jul</div>
<div class="t " style="left:1251.50px;top:919.00px;font-size:14.7px;color:#6b7280;">4:17pm, 14 Jul</div>
<div style="position:absolute;left:292.25px;top:957.75px;width:13.5px;height:13.5px;border:1.25px solid #d6d9de;border-radius:4px;background:#fff;"></div>
<div class="t " style="left:320.60px;top:958.00px;font-size:15.0px;color:#1f2937;">node-cache-Windo-....8arexa</div>
<div class="t " style="left:582.50px;top:958.00px;font-size:15px;color:#6b7280;letter-spacing:0.14px;text-decoration:underline;text-underline-offset:2.5px;text-decoration-skip-ink:none;text-decoration-color:#9ca3af;">org-wi...public</div>
<div class="t " style="left:717.50px;top:958.00px;font-size:15.0px;color:#6b7280;">frontend</div>
<div style="position:absolute;left:852px;top:955px;width:38px;height:18px;border:1px solid #ddd6fe;background:#f5f3ff;border-radius:4px;"></div>
<div class="t " style="left:858.75px;top:960.00px;font-size:12.6px;color:#7c3aed;letter-spacing:0.2px;">main</div>
<div class="t " style="left:1006.70px;top:959.00px;font-size:14px;color:#1f2937;letter-spacing:-0.4px;">10 GB</div>
<div class="t " style="left:1110.40px;top:959.00px;font-size:14.7px;color:#6b7280;">10:15am, 14 Jul</div>
<div class="t " style="left:1251.50px;top:959.00px;font-size:14.7px;color:#6b7280;">10:15am, 14 Jul</div>
<div style="position:absolute;left:292.25px;top:997.75px;width:13.5px;height:13.5px;border:1.25px solid #d6d9de;border-radius:4px;background:#fff;"></div>
<div class="t " style="left:320.60px;top:998.00px;font-size:15.0px;color:#1f2937;">node-cache-Windo...35dfv8a</div>
<div class="t " style="left:582.50px;top:998.00px;font-size:15px;color:#6b7280;letter-spacing:0.14px;text-decoration:underline;text-underline-offset:2.5px;text-decoration-skip-ink:none;text-decoration-color:#9ca3af;">org-wi...public</div>
<div class="t " style="left:717.50px;top:998.00px;font-size:15.0px;color:#6b7280;">frontend</div>
<div style="position:absolute;left:852px;top:995px;width:38px;height:18px;border:1px solid #ddd6fe;background:#f5f3ff;border-radius:4px;"></div>
<div class="t " style="left:858.75px;top:1000.00px;font-size:12.6px;color:#7c3aed;letter-spacing:0.2px;">main</div>
<div class="t " style="left:1006.70px;top:999.00px;font-size:14px;color:#1f2937;letter-spacing:-0.4px;">10 GB</div>
<div class="t " style="left:1110.40px;top:999.00px;font-size:14.7px;color:#6b7280;">9:48am, 14 Jul</div>
<div class="t " style="left:1251.50px;top:999.00px;font-size:14.7px;color:#6b7280;">9:48am, 14 Jul</div>
<div style="position:absolute;left:273px;top:1041px;width:1126px;height:1px;background:#e0e2e6;"></div>
<div class="t " style="left:288.50px;top:1054.00px;font-size:12.75px;color:#6b7280;">Showing 1-20 of 456</div>
<svg style="left:1198px;top:1054px" width="10" height="11" viewBox="0 0 10 11" fill="none" stroke="#9ca3af" stroke-width="1.4" stroke-linecap="round" stroke-linejoin="round"><path d="M7 1.5 3 5.5l4 4"/></svg>
<div style="position:absolute;left:1229px;top:1049.5px;width:18px;height:20px;background:#15935f;border-radius:4px;"></div>
<div class="t " style="left:1234.50px;top:1054.00px;font-size:12.8px;color:#ffffff;">1</div>
<div class="t " style="left:1259.90px;top:1054.00px;font-size:12.8px;color:#4b5563;">2</div>
<div class="t " style="left:1285.50px;top:1054.00px;font-size:12.8px;color:#4b5563;">3</div>
<div class="t " style="left:1305.20px;top:1054.00px;font-size:12.8px;color:#9ca3af;">...</div>
<div class="t " style="left:1327.90px;top:1054.00px;font-size:12.8px;color:#4b5563;">10</div>
<svg style="left:1369px;top:1054px" width="10" height="11" viewBox="0 0 10 11" fill="none" stroke="#9ca3af" stroke-width="1.4" stroke-linecap="round" stroke-linejoin="round"><path d="M3 1.5 7 5.5l-4 4"/></svg>
<svg style="left:0;top:0" width="1440" height="1218"><path d="M434.2 776.4 L448.6 781.7 L442.3 783.9 L439.4 790.8 Z" fill="#111827" stroke="#fff" stroke-width="0.5" stroke-linejoin="round"/></svg>
<div style="position:absolute;left:1375px;top:1127px;width:46px;height:46px;background:#4ea86b;border-radius:50%;"></div>
<svg style="left:1374.5px;top:1126.7px" width="46" height="46" viewBox="0 0 46 46"><path d="M13.5 11.5a1.5 1.5 0 0 1 1.5-1.5h17a1.5 1.5 0 0 1 1.5 1.5v22.5l-5.5-2.5H15a1.5 1.5 0 0 1-1.5-1.5Z" fill="#fff"/><path d="M16.5 25.5c3.5 3 9.5 3 13 0" fill="none" stroke="#4ea86b" stroke-width="1.2" stroke-linecap="round"/></svg>
</div></body></html>
